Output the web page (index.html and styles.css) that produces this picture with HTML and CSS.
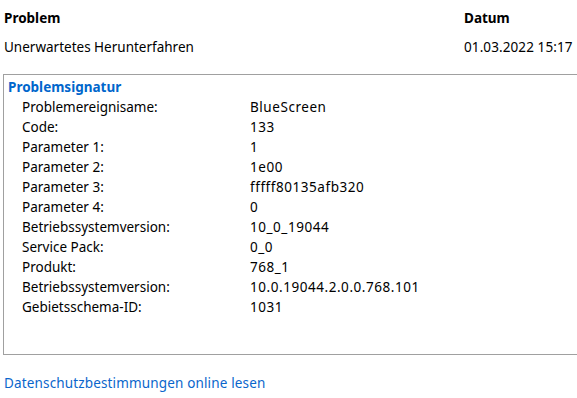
FILE: index.html
```html
<!DOCTYPE html>
<html lang="de">
<head>
  <meta charset="UTF-8" />
  <title>Problemdetails</title>
  <link rel="stylesheet" href="styles.css">
</head>
<body>
  <div class="page">
    <div class="summary">
      <div class="col-problem">
        <div class="head">Problem</div>
        <div class="cell">Unerwartetes Herunterfahren</div>
      </div>
      <div class="col-date">
        <div class="head">Datum</div>
        <div class="cell date">01.03.2022 15:17</div>
      </div>
    </div>

    <div class="details">
      <div class="section-title">Problemsignatur</div>
      <div class="sig">
        <span>Problemereignisame:</span><span class="val">BlueScreen</span>
        <span>Code:</span><span class="val">133</span>
        <span>Parameter 1:</span><span class="val">1</span>
        <span>Parameter 2:</span><span class="val">1e00</span>
        <span>Parameter 3:</span><span class="val">fffff80135afb320</span>
        <span>Parameter 4:</span><span class="val">0</span>
        <span>Betriebssystemversion:</span><span class="val">10_0_19044</span>
        <span>Service Pack:</span><span class="val">0_0</span>
        <span>Produkt:</span><span class="val">768_1</span>
        <span>Betriebssystemversion:</span><span class="val">10.0.19044.2.0.0.768.101</span>
        <span>Gebietsschema-ID:</span><span class="val">1031</span>
      </div>
    </div>

    <a class="privacy" href="#">Datenschutzbestimmungen online lesen</a>
  </div>
</body>
</html>
```

FILE: styles.css
```css
html, body {
  margin: 0;
  background: #fff;
  overflow: hidden;
}
body {
  font-family: 'Noto Sans', 'Open Sans', sans-serif;
  font-size: 13.5px;
  color: #000;
}
.page {
  width: 577px;
  height: 398px;
  overflow: hidden;
}
.summary {
  display: flex;
  padding: 7px 0 0 4px;
}
.col-problem {
  width: 460px;
}
.head {
  font-weight: 700;
  line-height: 22px;
}
.cell {
  line-height: 22px;
  margin-top: 7px;
}
.date {
  letter-spacing: 0.1px;
}
.details {
  margin: 16px 0 0 3px;
  width: 640px;
  height: 279px;
  border: 1px solid #a0a0a0;
  border-right: none;
}
.section-title {
  color: #0066cc;
  font-weight: 700;
  line-height: 20px;
  padding: 2px 0 0 4px;
}
.sig {
  display: grid;
  grid-template-columns: 228px auto;
  padding-left: 18px;
  line-height: 20px;
}
.val {
  letter-spacing: 0.55px;
}
.privacy {
  display: block;
  margin: 18px 0 0 4px;
  color: #0a66cc;
  text-decoration: none;
  line-height: 20px;
  letter-spacing: 0.15px;
}
```
